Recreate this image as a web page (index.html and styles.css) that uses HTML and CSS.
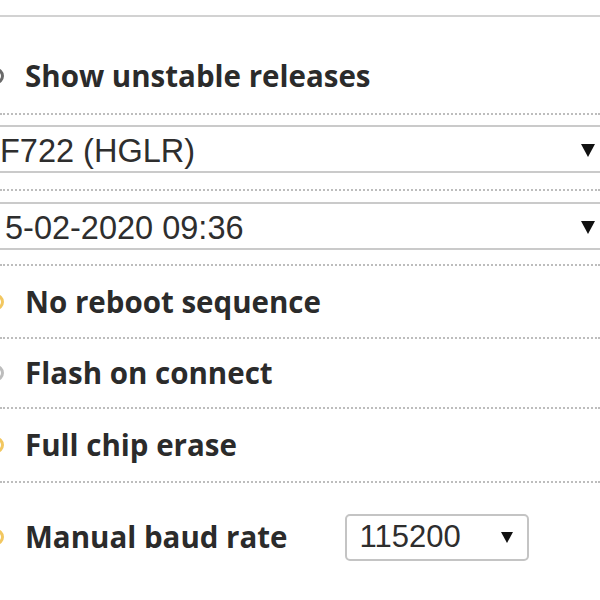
FILE: index.html
```html
<!DOCTYPE html>
<html>
<head>
<meta charset="utf-8">
<link rel="stylesheet" href="styles.css">
</head>
<body>
<div class="panel">
  <div class="top"></div>
  <div class="row row-first">
    <span class="toggle toggle-dark"></span>
    <span class="label">Show unstable releases</span>
  </div>
  <div class="row row-select1">
    <div class="select">
      <span class="select-text">F722 (HGLR)</span>
      <svg class="arrow" width="14" height="13" viewBox="0 0 14 13"><polygon points="0,0 14,0 7,13" fill="#111"/></svg>
    </div>
  </div>
  <div class="row row-select2">
    <div class="select">
      <span class="select-text indent">5-02-2020 09:36</span>
      <svg class="arrow" width="14" height="13" viewBox="0 0 14 13"><polygon points="0,0 14,0 7,13" fill="#111"/></svg>
    </div>
  </div>
  <div class="row row-a">
    <span class="toggle toggle-on"></span>
    <span class="label">No reboot sequence</span>
  </div>
  <div class="row row-b">
    <span class="toggle toggle-off"></span>
    <span class="label">Flash on connect</span>
  </div>
  <div class="row row-c">
    <span class="toggle toggle-on"></span>
    <span class="label">Full chip erase</span>
  </div>
  <div class="row row-last">
    <span class="toggle toggle-on"></span>
    <span class="label">Manual baud rate</span>
    <div class="baud">
      <span class="baud-text">115200</span>
      <svg class="baud-arrow" width="12" height="11" viewBox="0 0 12 11"><polygon points="0,0 12,0 6,11" fill="#111"/></svg>
    </div>
  </div>
</div>
</body>
</html>
```

FILE: styles.css
```css
html, body {
  margin: 0;
  padding: 0;
  background: #ffffff;
}

body {
  width: 600px;
  height: 600px;
  overflow: hidden;
  font-family: "Open Sans", "Liberation Sans", sans-serif;
  color: #2b2b2b;
}

.panel {
  display: flex;
  flex-direction: column;
}

.top {
  height: 15px;
  border-bottom: 2px solid #d2d2d2;
}

.row {
  box-sizing: border-box;
  display: flex;
  align-items: center;
  border-bottom: 2px dotted #bdbdbd;
}

.row-first {
  height: 98px;
  padding-top: 22px;
}

.row-select1 {
  height: 76px;
  align-items: flex-start;
  padding-top: 10px;
}

.row-select2 {
  height: 75px;
  align-items: flex-start;
  padding-top: 11px;
}

.row-a { height: 73px; }
.row-b { height: 70px; }
.row-c { height: 74px; }

.row-last {
  height: 108px;
  border-bottom: none;
}

.toggle {
  box-sizing: border-box;
  flex: none;
  width: 16px;
  height: 16px;
  margin-left: -12px;
  margin-right: 21px;
  border-radius: 50%;
  border: 3px solid #9a9a9a;
}

.toggle-dark { border-color: #6a6a6a; }
.toggle-on { border-color: #f2c760; }
.toggle-off { border-color: #bdbdbd; }

.label {
  font-size: 29.5px;
  font-weight: 700;
  line-height: 1;
  color: #2b2b2b;
  white-space: nowrap;
}

.select {
  box-sizing: border-box;
  flex: none;
  display: flex;
  align-items: center;
  justify-content: space-between;
  width: 620px;
  margin-left: -8px;
  height: 48px;
  border-top: 2px solid #cacaca;
  border-bottom: 2px solid #cacaca;
  padding-left: 8px;
  padding-top: 4px;
  padding-right: 17px;
  background: #ffffff;
}

.select-text {
  font-family: "Liberation Sans", Arial, sans-serif;
  font-size: 32.5px;
  color: #2e2e2e;
  white-space: nowrap;
}

.indent {
  margin-left: 5px;
}

.arrow {
  display: block;
  flex: none;
  margin-top: -2px;
}

.baud {
  box-sizing: border-box;
  display: flex;
  align-items: center;
  justify-content: space-between;
  width: 184px;
  height: 47px;
  margin-left: 57px;
  padding-left: 13px;
  padding-right: 14px;
  border: 2px solid #c4c4c4;
  border-radius: 5px;
}

.baud-text {
  font-family: "Liberation Sans", Arial, sans-serif;
  font-size: 31px;
  color: #2e2e2e;
}

.baud-arrow {
  display: block;
  flex: none;
}
```
